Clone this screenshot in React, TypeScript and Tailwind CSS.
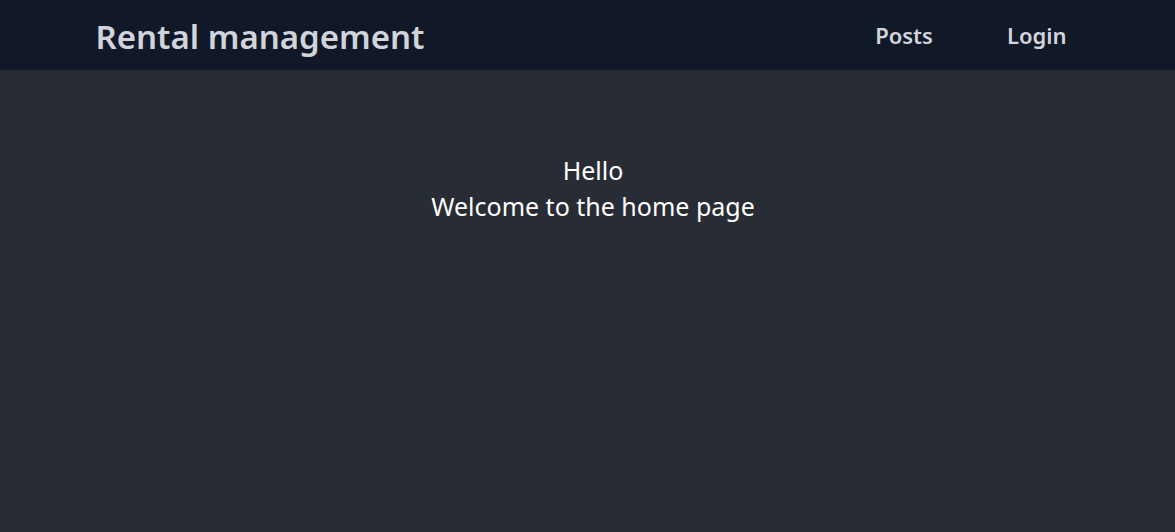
export default function App() {
  return (
    <div className="min-h-[532px] bg-[#282c34] font-['Noto_Sans',sans-serif]">
      <header className="h-[70px] bg-[#111827]">
        <div className="mx-auto flex h-full max-w-[1024px] items-center justify-between px-5">
          <h1 className="mt-[3px] text-[33px] font-semibold text-[#d1d5db]">Rental management</h1>
          <nav className="flex items-center gap-[50px] text-[22px] font-semibold text-[#d1d5db]">
            <a className="px-3">Posts</a>
            <a className="pl-3 pr-[13px]">Login</a>
          </nav>
        </div>
      </header>
      <main className="flex flex-col items-center pl-[11px] pt-[82px] text-[25px] leading-[36px] text-white">
        <p>Hello</p>
        <p>Welcome to the home page</p>
      </main>
    </div>
  );
}
